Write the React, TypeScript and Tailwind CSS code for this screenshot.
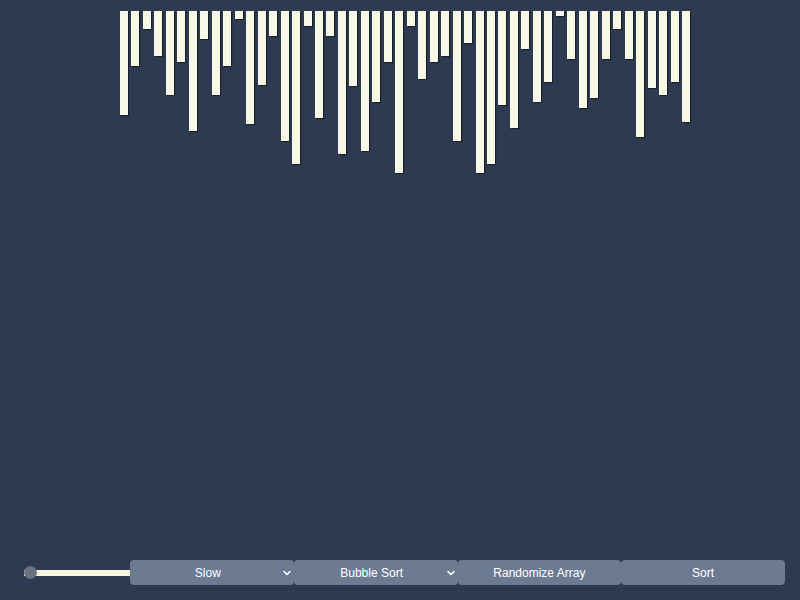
import { useState } from 'react'

const initial = [
  104, 55, 18, 45, 84, 51, 120, 28, 84, 55, 8, 113, 74, 25, 130, 153, 15, 107, 25, 143, 75, 140, 91, 51, 162,
  15, 68, 51, 45, 130, 32, 162, 153, 94, 117, 38, 91, 71, 5, 48, 97, 87, 48, 18, 48, 126, 77, 84, 71, 111,
]

function Chevron() {
  return (
    <svg className="absolute right-[3px] top-1/2 -translate-y-1/2" width="8" height="5" viewBox="0 0 8 5" fill="none">
      <polyline points="1,1 4,4 7,1" stroke="white" strokeWidth="1.6" strokeLinecap="round" strokeLinejoin="round" />
    </svg>
  )
}

export default function App() {
  const [bars] = useState(initial)
  const [speed, setSpeed] = useState(0)

  return (
    <div
      className="h-screen w-full bg-[#2d3a4f] flex flex-col justify-between"
      style={{ fontFamily: '"Liberation Sans", Arial, sans-serif' }}
    >
      {/* Bars */}
      <div className="flex items-start gap-[3.47px] pl-[120px] pt-[11px]">
        {bars.map((h, i) => (
          <div
            key={i}
            className="w-[8px] bg-[#f7f9e6] shadow-[1px_1px_1px_rgba(0,0,0,0.45)]"
            style={{ height: h }}
          />
        ))}
      </div>

      {/* Controls */}
      <div className="flex items-center pl-[24px] pr-[15px] pb-[15px]">
        <input
          type="range"
          min={0}
          max={100}
          value={speed}
          onChange={(e) => setSpeed(Number(e.target.value))}
          className="w-[106px] h-[6px] appearance-none bg-[#f5f5dc] outline-none [&::-webkit-slider-thumb]:appearance-none [&::-webkit-slider-thumb]:w-[13px] [&::-webkit-slider-thumb]:h-[13px] [&::-webkit-slider-thumb]:rounded-full [&::-webkit-slider-thumb]:bg-[#6b7280]"
        />
        <div className="relative flex-1 h-[25px] rounded-[4px] bg-[#6c7a92] text-white text-[12px] flex items-center justify-center">
          <span className="pr-[8px]">Slow</span>
          <Chevron />
        </div>
        <div className="relative flex-1 h-[25px] rounded-[4px] bg-[#6c7a92] text-white text-[12px] flex items-center justify-center">
          <span className="pr-[8px]">Bubble Sort</span>
          <Chevron />
        </div>
        <button className="flex-1 h-[25px] rounded-[4px] bg-[#6c7a92] text-white text-[12px] flex items-center justify-center">
          Randomize Array
        </button>
        <button className="flex-1 h-[25px] rounded-[4px] bg-[#6c7a92] text-white text-[12px] flex items-center justify-center">
          Sort
        </button>
      </div>
    </div>
  )
}
